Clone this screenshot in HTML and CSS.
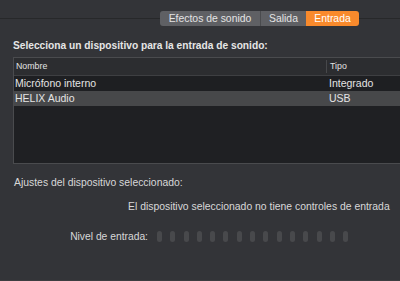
FILE: index.html
```html
<!DOCTYPE html>
<html lang="es">
<head>
<meta charset="utf-8">
<title>Sonido</title>
<link rel="stylesheet" href="styles.css">
</head>
<body>
<div class="page">
  <div class="tabbar">
    <div class="tabs">
      <div class="tab tab-first">Efectos de sonido</div>
      <div class="tab tab-mid">Salida</div>
      <div class="tab tab-active">Entrada</div>
    </div>
  </div>

  <div class="heading">Selecciona un dispositivo para la entrada de sonido:</div>

  <div class="table">
    <div class="thead">
      <div class="th th-name">Nombre</div>
      <div class="th th-type">Tipo</div>
    </div>
    <div class="row row-odd">
      <div class="cell cell-name">Micrófono interno</div>
      <div class="cell cell-type">Integrado</div>
    </div>
    <div class="row row-even">
      <div class="cell cell-name">HELIX Audio</div>
      <div class="cell cell-type">USB</div>
    </div>
    <div class="empty"></div>
  </div>

  <div class="settings-title">Ajustes del dispositivo seleccionado:</div>
  <div class="message">El dispositivo seleccionado no tiene controles de entrada</div>

  <div class="level">
    <div class="level-label">Nivel de entrada:</div>
    <div class="meter">
      <span class="seg"></span><span class="seg"></span><span class="seg"></span><span class="seg"></span><span class="seg"></span>
      <span class="seg"></span><span class="seg"></span><span class="seg"></span><span class="seg"></span><span class="seg"></span>
      <span class="seg"></span><span class="seg"></span><span class="seg"></span><span class="seg"></span><span class="seg"></span>
    </div>
  </div>
</div>
</body>
</html>
```

FILE: styles.css
```css
html, body {
  margin: 0;
  padding: 0;
}

body {
  width: 400px;
  height: 281px;
  overflow: hidden;
  background: #333438;
  font-family: "Liberation Sans", Arial, Helvetica, sans-serif;
  color: #dedede;
}

.page {
  height: 280px;
  border-bottom: 1px solid #3c3d40;
  overflow: hidden;
}

.tabbar {
  margin-top: 11px;
  height: 15px;
  background: linear-gradient(to bottom,
    transparent 7px, #27282a 7px, #27282a 8px, transparent 8px);
}

.tabs {
  display: flex;
  margin-left: 160px;
  height: 15px;
}

.tab {
  height: 15px;
  line-height: 15px;
  font-size: 10.4px;
  text-align: center;
  color: #e4e4e4;
  background: #5f6064;
  box-sizing: border-box;
}

.tab-first {
  width: 101px;
  border-radius: 3px 0 0 3px;
  border-right: 1px solid #4a4b4e;
}

.tab-mid {
  width: 45px;
}

.tab-active {
  width: 53px;
  background: #f98a2c;
  color: #ffffff;
  border-radius: 0 3px 3px 0;
}

.heading {
  margin: 13px 0 0 13px;
  height: 13px;
  line-height: 13px;
  font-size: 10.2px;
  font-weight: bold;
  color: #e6e6e6;
  white-space: nowrap;
}

.table {
  margin: 5px 0 0 13px;
  width: 400px;
  border: 1px solid #4a4b4e;
  background: #1f2023;
}

.thead {
  display: grid;
  grid-template-columns: 312px 1fr;
  height: 17px;
  background: #2c2d30;
  border-bottom: 1px solid #3e3f42;
  align-items: center;
}

.th {
  font-size: 8.8px;
  color: #e2e2e2;
  line-height: 13px;
}

.th-name {
  padding-left: 2px;
}

.th-type {
  padding-left: 3px;
  border-left: 1px solid #47484b;
}

.row {
  display: grid;
  grid-template-columns: 312px 1fr;
  height: 15px;
  align-items: center;
}

.row-odd {
  background: #1e1f22;
}

.row-even {
  background: #47484a;
}

.cell {
  font-size: 10.5px;
  line-height: 15px;
  color: #e4e4e4;
  white-space: nowrap;
}

.cell-name {
  padding-left: 1px;
}

.cell-type {
  padding-left: 3px;
}

.empty {
  height: 57px;
  background: #1f2023;
}

.settings-title {
  margin: 12px 0 0 14px;
  height: 13px;
  line-height: 13px;
  font-size: 10.4px;
  color: #d8d8d8;
  white-space: nowrap;
}

.message {
  margin: 11px 0 0 128px;
  height: 13px;
  line-height: 13px;
  font-size: 10.4px;
  color: #d8d8d8;
  white-space: nowrap;
}

.level {
  display: flex;
  align-items: center;
  gap: 9px;
  margin-top: 18px;
  height: 11px;
}

.level-label {
  width: 148px;
  text-align: right;
  font-size: 10.3px;
  line-height: 13px;
  color: #d8d8d8;
  white-space: nowrap;
}

.meter {
  display: flex;
  gap: 8.3px;
}

.seg {
  display: block;
  width: 5px;
  height: 11px;
  border-radius: 2.5px;
  background: #48494c;
}
```
